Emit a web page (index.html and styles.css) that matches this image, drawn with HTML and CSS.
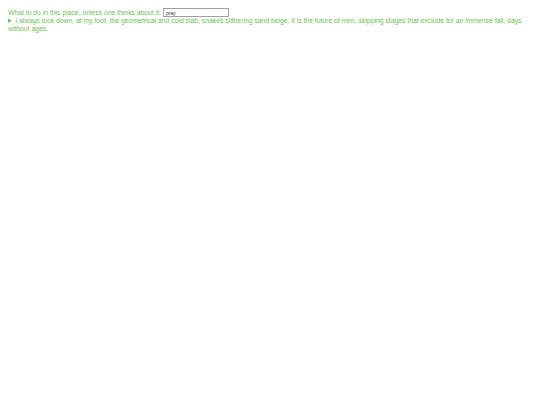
FILE: index.html
```html
<!DOCTYPE html>
<html lang="en">
  <head>
    <meta charset="UTF-8" />
    <meta name="viewport" content="width=device-width, initial-scale=1.0" />
    <title>Place</title>
    <link rel="stylesheet" href="styles.css">
  </head>
  <body>
    <div class="question">
      <label for="answer">What to do in this place, unless one thinks about it:</label>
      <input id="answer" class="answer" type="text" value="pray">
    </div>
    <details class="story">
      <summary>I always look down, at my foot, the geometrical and cold slab, snakes slithering sand beige, it is the future of men, skipping stages that exclude for an immense fall, days without ages.</summary>
    </details>
  </body>
</html>
```

FILE: styles.css
```css
body {
  margin: 8px;
  font-family: "Liberation Sans", Arial, sans-serif;
  font-size: 6.8px;
  line-height: 8px;
  color: #6cc450;
  background-color: #fff;
}

.question {
  display: flex;
  align-items: center;
  gap: 2px;
  height: 9px;
}

.answer {
  width: 66px;
  height: 9px;
  box-sizing: border-box;
  padding: 0 2px;
  border: 1px solid #a0a0a0;
  font-family: "Liberation Sans", Arial, sans-serif;
  font-size: 5px;
  color: #333;
}

.story summary {
  cursor: pointer;
}
```
